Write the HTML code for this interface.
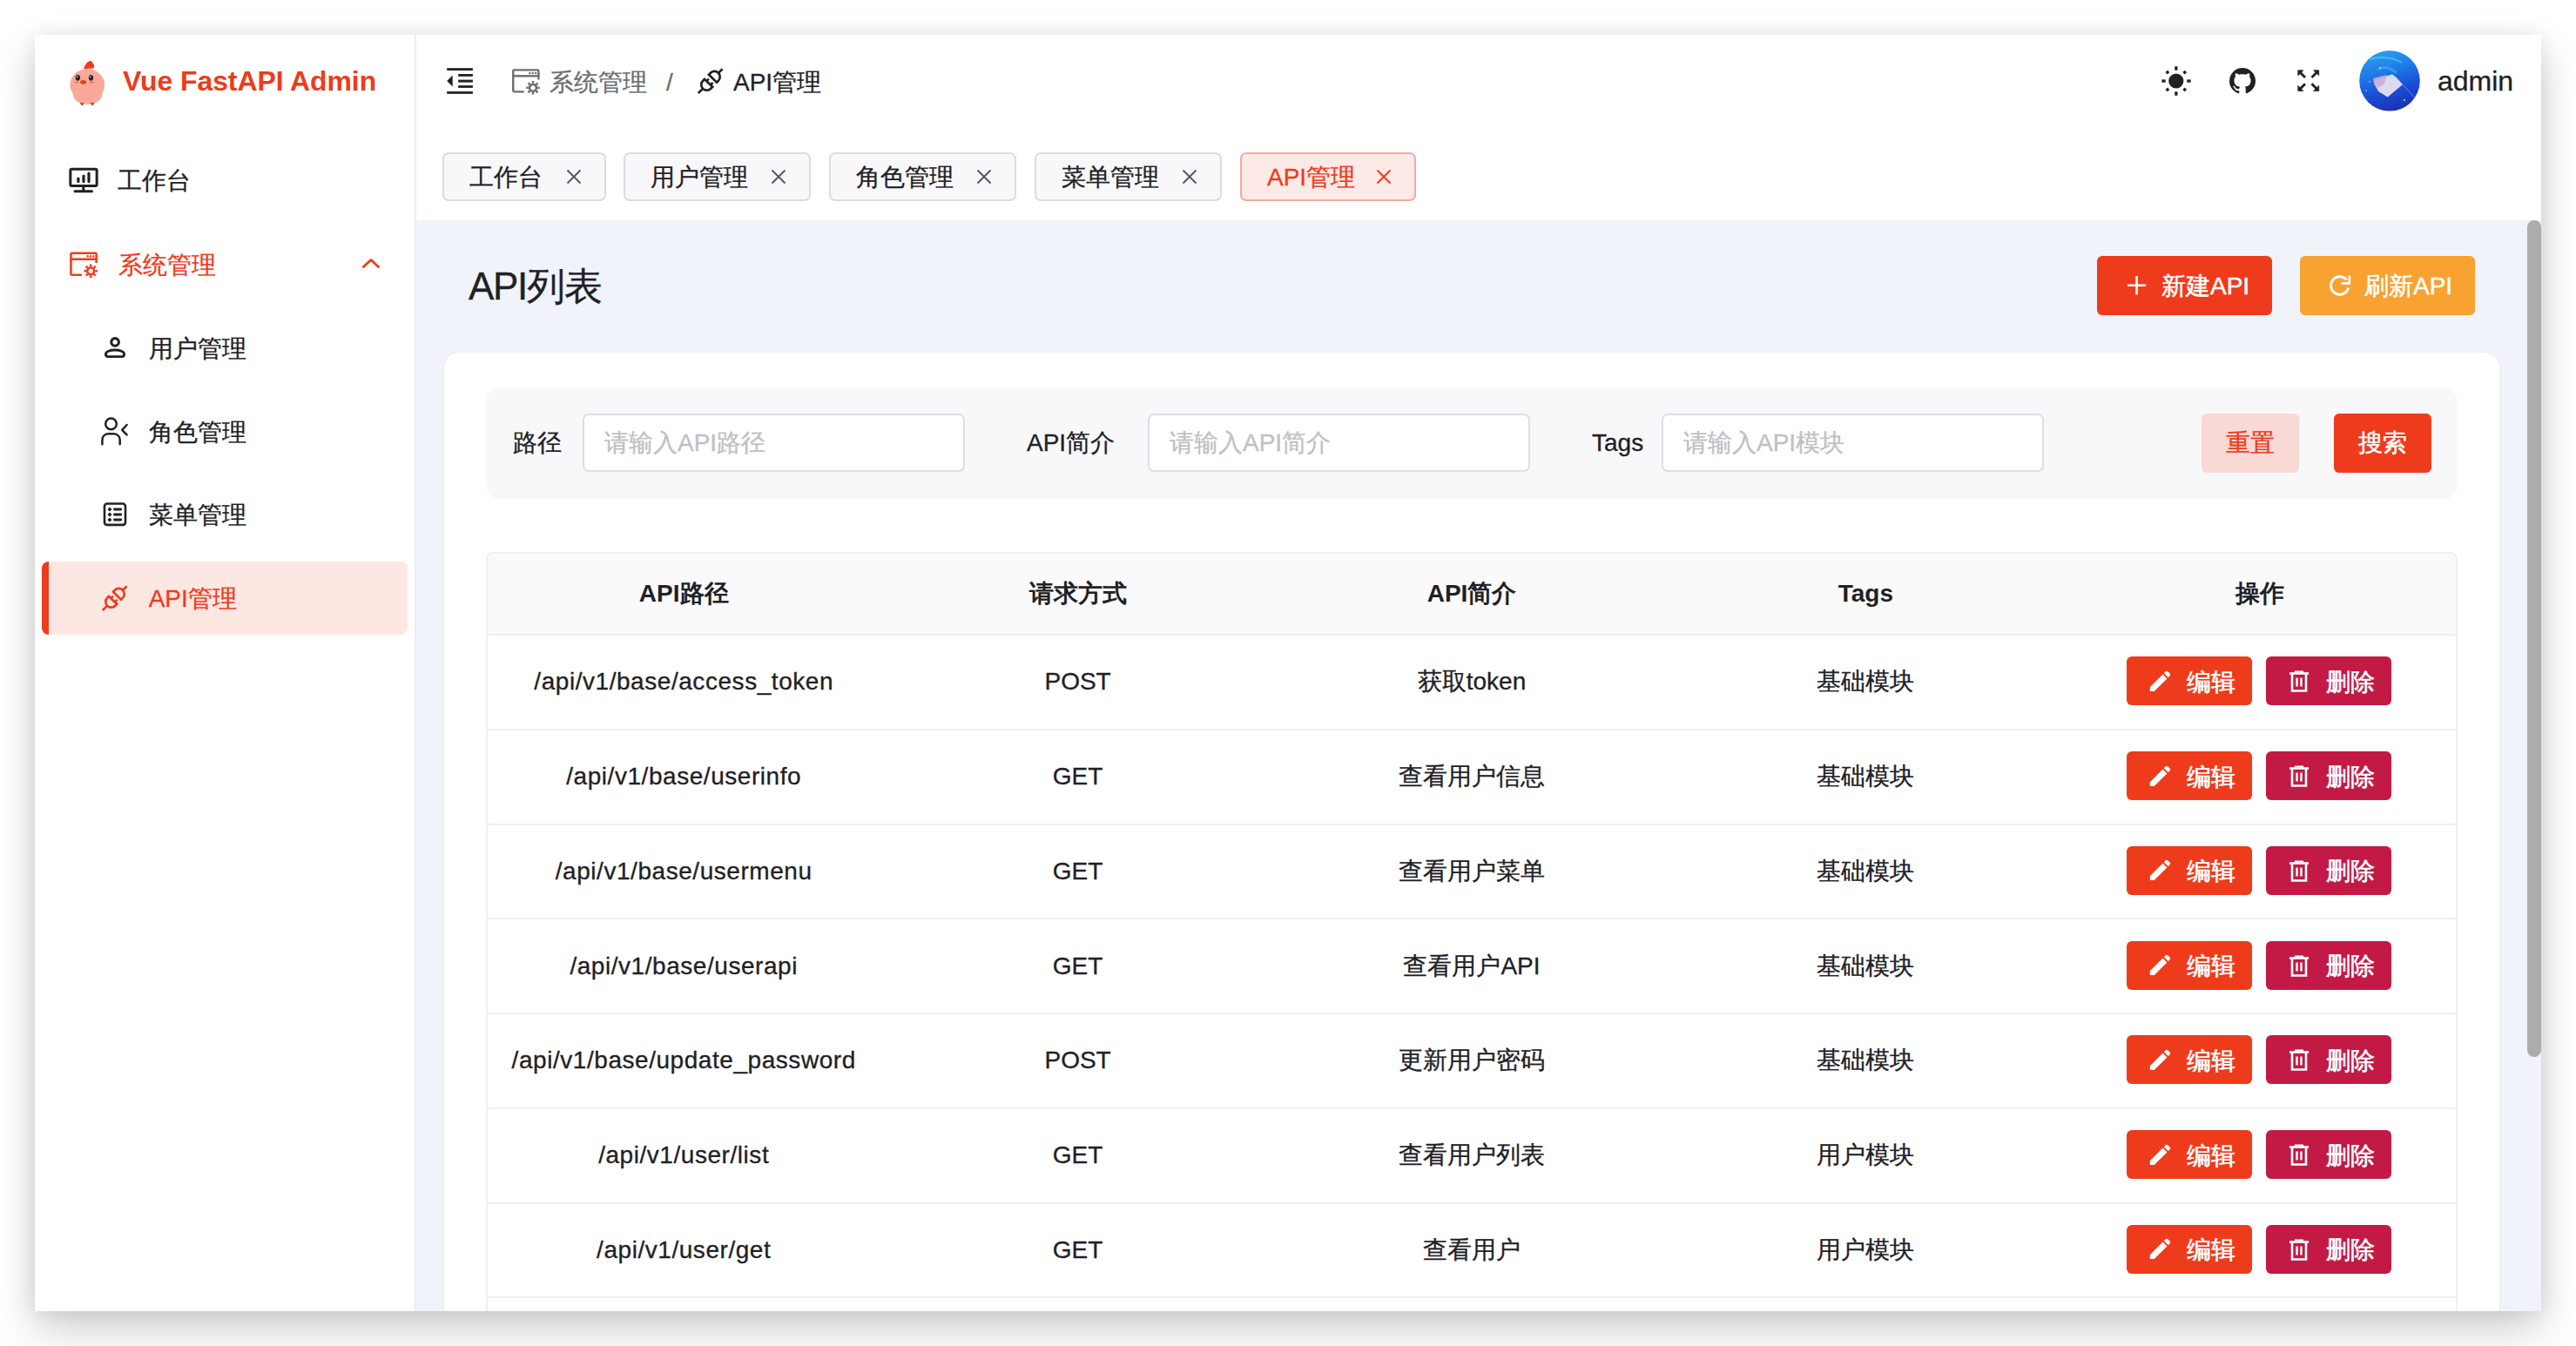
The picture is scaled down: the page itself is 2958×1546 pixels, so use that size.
<!DOCTYPE html>
<html><head><meta charset="utf-8">
<style>
*{box-sizing:border-box;margin:0;padding:0}
html,body{width:2958px;height:1546px;overflow:hidden;background:#ffffff;font-family:"Liberation Sans",sans-serif;color:#1f2125}
.abs{position:absolute;overflow:visible}
.t{position:absolute;white-space:nowrap;-webkit-text-stroke:0.3px currentColor}
.r{position:absolute}
</style></head><body>

<div class="r" style="left:40px;top:40px;width:2878px;height:1466px;background:#fff;box-shadow:0 20px 45px rgba(0,0,0,0.20),0 0 20px rgba(0,0,0,0.07)"></div>
<div class="r" style="left:0;top:0;width:2918px;height:1506px;overflow:hidden">
<div class="r" style="left:478px;top:253px;width:2440px;height:1253px;background:#f1f3fa"></div>
<div class="r" style="left:476px;top:40px;width:2px;height:1466px;background:#ececf2"></div>
<svg class="abs" style="left:74px;top:64px" width="54" height="62" viewBox="74 64 54 62" >
  <path d="M96.2 79 C97 75 99.5 71.5 102.5 70.2 C105 69.5 106.8 71.2 106.5 73.3 C108.6 73.6 108.8 76.5 107.3 78.5 Z" fill="#ea3c1c"/>
  <path d="M94.5 72.5 v1.5 M94.5 75 v1.5" stroke="#cf8a80" stroke-width="0.6"/>
  <ellipse cx="100.6" cy="110.5" rx="15.5" ry="9.5" fill="#f8ab9b"/>
  <path d="M86 106 C82.5 107 83.5 114 88 114.5 Z" fill="#f6b2a5"/>
  <path d="M114.5 106 C119 106.5 118.5 113.5 113 114.5 Z" fill="#f6b2a5"/>
  <ellipse cx="100.3" cy="97.5" rx="19.8" ry="18.4" fill="#f8a898"/>
  <ellipse cx="89.3" cy="89.3" rx="2.6" ry="3.4" fill="#1e2230"/>
  <ellipse cx="104.5" cy="89.3" rx="2.6" ry="3.4" fill="#1e2230"/>
  <ellipse cx="88.6" cy="88.2" rx="0.6" ry="1" fill="#fff"/><ellipse cx="103.8" cy="88.2" rx="0.6" ry="1" fill="#fff"/>
  <ellipse cx="95.6" cy="94.3" rx="3.5" ry="2.4" fill="#ea3c1c"/>
  <rect x="86" y="93.8" width="4.2" height="1.3" fill="#f06048"/>
  <rect x="103.2" y="93.8" width="4.2" height="1.3" fill="#f06048"/>
  <path d="M91.5 118 L94 121.8 L96.8 118 Z M103.3 118 L106 121.8 L108.8 118 Z" fill="#ea3c1c"/>
</svg>
<div class="t" style="left:141px;top:72.50px;font-size:32px;line-height:40px;color:#ea3d1c;font-weight:bold;letter-spacing:-0.1px;-webkit-text-stroke:0">Vue FastAPI Admin</div>
<svg class="abs" style="left:72px;top:185px" width="50" height="43" viewBox="72 185 50 43" ><g fill="none" stroke="#1f2125" stroke-linecap="round" stroke-linejoin="round">
 <rect x="80.85" y="194.3" width="30.3" height="19.2" rx="1.5" stroke-width="3"/>
 <path d="M95.8 214 V219.5 M86 219.7 H105.5" stroke-width="3"/>
 <path d="M89.9 205 V208.6 M96 202.2 V208.6 M102 199 V208.6" stroke-width="3.2"/></g></svg>
<div class="t" style="left:135px;top:187.70px;font-size:28px;line-height:40px;color:#1f2125;">工作台</div>
<svg class="abs" style="left:72px;top:280px" width="50" height="44" viewBox="72 280 50 44" ><g transform="translate(-507.8 210.39999999999998)" fill="none" stroke="#ee3b1b" stroke-width="2.5" stroke-linejoin="round">
 <path d="M601.7 105.35 H590.5 Q589.25 105.35 589.25 104.1 V81.6 Q589.25 80.35 590.5 80.35 H617.2 Q618.45 80.35 618.45 81.6 V91.6"/>
 <path d="M589.25 87.3 H618.45"/>
 <circle cx="608.4" cy="83.9" r="1.25" fill="#ee3b1b" stroke="none"/>
 <circle cx="611.8" cy="83.9" r="1.25" fill="#ee3b1b" stroke="none"/>
 <circle cx="615.2" cy="83.9" r="1.25" fill="#ee3b1b" stroke="none"/>
 <circle cx="612" cy="100.8" r="3.9" stroke-width="2.6"/>
 <path d="M612 93.1 V95.6 M612 106 V108.5 M604.3 100.8 H606.8 M617.2 100.8 H619.7 M606.55 95.35 L608.3 97.1 M615.7 104.5 L617.45 106.25 M606.55 106.25 L608.3 104.5 M615.7 97.1 L617.45 95.35" stroke-width="2.5"/>
</g></svg>
<div class="t" style="left:135.5px;top:284.50px;font-size:28px;line-height:40px;color:#ee3b1b;">系统管理</div>
<svg class="abs" style="left:410px;top:290px" width="32" height="24" viewBox="410 290 32 24" ><path d="M417.3 306.6 L426 298.4 L434.6 306.6" fill="none" stroke="#ee3b1b" stroke-width="2.8" stroke-linecap="round" stroke-linejoin="round"/></svg>
<svg class="abs" style="left:112px;top:380px" width="40" height="36" viewBox="112 380 40 36" ><g fill="none" stroke="#1f2125" stroke-width="2.9" stroke-linejoin="round">
 <circle cx="132.1" cy="392.9" r="4.3" stroke-width="3.1"/>
 <path d="M124 409.6 H140.2 C141.8 409.6 142.6 408.4 142.6 406.8 C142.6 403.8 137.5 402 132 402 C126.5 402 121.4 403.8 121.4 406.8 C121.4 408.4 122.2 409.6 124 409.6 Z"/></g></svg>
<div class="t" style="left:170.7px;top:380.70px;font-size:28px;line-height:40px;color:#1f2125;">用户管理</div>
<svg class="abs" style="left:110px;top:474px" width="42" height="42" viewBox="110 474 42 42" ><g fill="none" stroke="#1f2125" stroke-width="2.5" stroke-linecap="round" stroke-linejoin="round">
 <circle cx="127.5" cy="486.9" r="6.3"/>
 <path d="M117.4 510.3 V505.5 C117.4 500.8 120.8 498.3 125 498.3 H130 C134.2 498.3 137.7 500.8 137.7 505.5 V510.3"/>
 <path d="M145.6 488 L140.2 493.8 L145.6 499.3"/></g></svg>
<div class="t" style="left:170.7px;top:476.50px;font-size:28px;line-height:40px;color:#1f2125;">角色管理</div>
<svg class="abs" style="left:112px;top:570px" width="40" height="40" viewBox="112 570 40 40" ><g fill="none" stroke="#1f2125">
 <rect x="120" y="578.5" width="24" height="24.4" rx="3" stroke-width="2.6"/>
 <path d="M131.4 585 H138.8 M131.4 591 H138.8 M131.4 597 H138.8" stroke-width="2.8" stroke-linecap="round"/>
 <path d="M126 583.3 L127.7 585 L126 586.7 L124.3 585 Z M126 589.3 L127.7 591 L126 592.7 L124.3 591 Z M126 595.3 L127.7 597 L126 598.7 L124.3 597 Z" fill="#1f2125" stroke="#1f2125" stroke-width="1.2"/></g></svg>
<div class="t" style="left:170.7px;top:571.50px;font-size:28px;line-height:40px;color:#1f2125;">菜单管理</div>
<div class="r" style="left:48px;top:645px;width:420px;height:84px;background:#fde7e3;border-radius:8px;overflow:hidden"><div class="r" style="left:0;top:0;width:8px;height:84px;background:#ee3b1b"></div></div>
<svg class="abs" style="left:105px;top:660px" width="50" height="50" viewBox="105 660 50 50" ><g transform="translate(111 666)" fill="none" stroke="#ee3b1b" stroke-width="2.7" stroke-linejoin="miter">
 <path d="M19 13.7 L21 11.7 A6.33 6.33 0 0 1 30 20.6 L28 22.6 Z"/>
 <path d="M30.2 11.6 L34.6 7.2"/>
 <path d="M14 19 L23.2 27.7 L21.2 29.7 A6.33 6.33 0 0 1 12 21 Z"/>
 <path d="M12 29.9 L6.8 35"/>
 <path d="M16.3 21.2 L18.9 18.6 M20.9 25.5 L23.5 22.9"/>
</g></svg>
<div class="t" style="left:170.7px;top:668.00px;font-size:28px;line-height:40px;color:#ee3b1b;">API管理</div>
<svg class="abs" style="left:505px;top:70px" width="50" height="45" viewBox="505 70 50 45" ><g fill="#1f2125">
 <rect x="513.2" y="78.2" width="29.7" height="2.8"/>
 <rect x="526.2" y="85" width="16.7" height="2.8"/>
 <rect x="526.2" y="91.6" width="16.7" height="3"/>
 <rect x="526.2" y="98.1" width="16.7" height="2.8"/>
 <rect x="513.2" y="105" width="29.7" height="2.8"/>
 <path d="M513.2 92.9 L519.7 86.4 V99.4 Z"/></g></svg>
<svg class="abs" style="left:580px;top:72px" width="50" height="40" viewBox="580 72 50 40" ><g transform="translate(0 0)" fill="none" stroke="#6b6e73" stroke-width="2.4" stroke-linejoin="round">
 <path d="M601.7 105.35 H590.5 Q589.25 105.35 589.25 104.1 V81.6 Q589.25 80.35 590.5 80.35 H617.2 Q618.45 80.35 618.45 81.6 V91.6"/>
 <path d="M589.25 87.3 H618.45"/>
 <circle cx="608.4" cy="83.9" r="1.25" fill="#6b6e73" stroke="none"/>
 <circle cx="611.8" cy="83.9" r="1.25" fill="#6b6e73" stroke="none"/>
 <circle cx="615.2" cy="83.9" r="1.25" fill="#6b6e73" stroke="none"/>
 <circle cx="612" cy="100.8" r="3.9" stroke-width="2.6"/>
 <path d="M612 93.1 V95.6 M612 106 V108.5 M604.3 100.8 H606.8 M617.2 100.8 H619.7 M606.55 95.35 L608.3 97.1 M615.7 104.5 L617.45 106.25 M606.55 106.25 L608.3 104.5 M615.7 97.1 L617.45 95.35" stroke-width="2.5"/>
</g></svg>
<div class="t" style="left:631px;top:74.50px;font-size:28px;line-height:40px;color:#6b6e73;">系统管理</div>
<div class="t" style="left:765px;top:74.50px;font-size:28px;line-height:40px;color:#6b6e73;">/</div>
<svg class="abs" style="left:795px;top:72px" width="45" height="40" viewBox="795 72 45 40" ><g transform="translate(795 72)" fill="none" stroke="#1f2125" stroke-width="2.7" stroke-linejoin="miter">
 <path d="M19 13.7 L21 11.7 A6.33 6.33 0 0 1 30 20.6 L28 22.6 Z"/>
 <path d="M30.2 11.6 L34.6 7.2"/>
 <path d="M14 19 L23.2 27.7 L21.2 29.7 A6.33 6.33 0 0 1 12 21 Z"/>
 <path d="M12 29.9 L6.8 35"/>
 <path d="M16.3 21.2 L18.9 18.6 M20.9 25.5 L23.5 22.9"/>
</g></svg>
<div class="t" style="left:842px;top:74.50px;font-size:28px;line-height:40px;color:#1f2125;">API管理</div>
<svg class="abs" style="left:2475px;top:68px" width="50" height="50" viewBox="2475 68 50 50" ><g fill="#1f2125">
 <circle cx="2498.8" cy="93" r="8.6"/>
 <rect x="2497.2" y="76.3" width="3.3" height="4.4"/>
 <rect x="2497.2" y="105.3" width="3.3" height="4.4"/>
 <rect x="2482.3" y="91.4" width="4.4" height="3.3"/>
 <rect x="2511.2" y="91.4" width="4.4" height="3.3"/>
 <g transform="rotate(45 2498.8 93)">
  <rect x="2497.1" y="77.3" width="3.4" height="3.4"/>
  <rect x="2497.1" y="105.3" width="3.4" height="3.4"/>
  <rect x="2483.1" y="91.3" width="3.4" height="3.4"/>
  <rect x="2511.1" y="91.3" width="3.4" height="3.4"/>
 </g></g></svg>
<svg class="abs" style="left:2557px;top:74.5px" width="36" height="36" viewBox="0 0 24 24"><path fill="#1f2125" d="M12 2A10 10 0 0 0 2 12c0 4.42 2.87 8.17 6.84 9.5c.5.08.66-.23.66-.5v-1.69c-2.77.6-3.36-1.34-3.36-1.34c-.46-1.16-1.11-1.470-1.11-1.47c-.91-.62.07-.6.07-.6c1 .07 1.53 1.03 1.53 1.03c.87 1.52 2.34 1.07 2.910 .83c.09-.65.35-1.09.63-1.34c-2.22-.25-4.55-1.11-4.55-4.92c0-1.11.38-2 1.03-2.71c-.1-.25-.45-1.29.1-2.64c0 0 .84-.27 2.75 1.02c.79-.22 1.65-.33 2.5-.33c.85 0 1.71.11 2.5.33c1.910-1.29 2.75-1.02 2.75-1.02c.55 1.35.2 2.39.1 2.64c.65.71 1.03 1.6 1.03 2.71c0 3.82-2.34 4.66-4.57 4.91c.36.31.69.92.69 1.85V21c0 .27.16.59.67.5C19.14 20.16 22 16.42 22 12A10 10 0 0 0 12 2"/></svg>
<svg class="abs" style="left:2630px;top:72px" width="42" height="42" viewBox="2630 72 42 42" ><g fill="#1f2125" stroke="#1f2125">
 <path d="M2640.5 82.5 L2647 89" stroke-width="2.9" fill="none"/>
 <path d="M2661 82.5 L2654.5 89" stroke-width="2.9" fill="none"/>
 <path d="M2640.5 102.7 L2647 96.2" stroke-width="2.9" fill="none"/>
 <path d="M2661 102.7 L2654.5 96.2" stroke-width="2.9" fill="none"/>
 <path d="M2638.8 80.8 H2644.8 L2638.8 86.8 Z" stroke-width="0.8"/>
 <path d="M2662.7 80.8 H2656.7 L2662.7 86.8 Z" stroke-width="0.8"/>
 <path d="M2638.8 104.4 H2644.8 L2638.8 98.4 Z" stroke-width="0.8"/>
 <path d="M2662.7 104.4 H2656.7 L2662.7 98.4 Z" stroke-width="0.8"/></g></svg>
<svg class="abs" style="left:2704px;top:54px" width="80" height="80" viewBox="2704 54 80 80" >
 <defs>
  <linearGradient id="avg" x1="0.35" y1="0" x2="0.65" y2="1">
   <stop offset="0" stop-color="#2b9ff0"/><stop offset="0.35" stop-color="#1f78e6"/>
   <stop offset="0.65" stop-color="#1a4ed6"/><stop offset="1" stop-color="#1b2fae"/>
  </linearGradient>
  <clipPath id="avc"><circle cx="2744" cy="92.8" r="34.8"/></clipPath>
 </defs>
 <circle cx="2744" cy="92.8" r="34.8" fill="url(#avg)"/>
 <g clip-path="url(#avc)">
  <path d="M2722 68 C2732 64 2748 66 2758 72" stroke="#5fd0ff" stroke-width="2" fill="none" opacity="0.6"/>
  <path d="M2730 80 C2738 76 2746 78 2752 84" stroke="#4ec3ff" stroke-width="3" fill="none" opacity="0.45"/>
  <path d="M2726.6 91.7 L2736.4 88.8 L2746.9 85.3 L2751.5 88.8 L2759 96.9 L2741.7 111.4 L2731.2 105 L2727.2 98 Z" fill="#dcdaf0"/>
  <path d="M2725 90 L2736 87 L2741 86 L2738 96 L2731 101 L2726 97 Z" fill="#c8a9dc" opacity="0.85"/>
  <path d="M2759 96.9 L2778 118" stroke="#9fb6ff" stroke-width="1" opacity="0.6"/>
  <circle cx="2733" cy="78" r="0.9" fill="#bff"/><circle cx="2717" cy="104" r="0.8" fill="#cdf"/>
  <circle cx="2761" cy="115" r="1" fill="#cdf"/><circle cx="2721" cy="94" r="0.8" fill="#cdf"/>
 </g>
</svg>
<div class="t" style="left:2799px;top:73.00px;font-size:32px;line-height:40px;color:#1f2125;">admin</div>
<div class="r" style="left:508px;top:175px;width:188px;height:56px;border:2px solid #dcdce2;border-radius:7px;background:#f8f8fb"></div><div class="t" style="left:539px;top:183.80px;font-size:28px;line-height:40px;color:#1f2125;">工作台</div><svg class="abs" style="left:648.5px;top:193px" width="20" height="20" viewBox="648.5 193 20 20" ><path d="M651.0 195.5 L666.0 210.5 M666.0 195.5 L651.0 210.5" stroke="#55575c" stroke-width="1.9" fill="none"/></svg>
<div class="r" style="left:716px;top:175px;width:215px;height:56px;border:2px solid #dcdce2;border-radius:7px;background:#f8f8fb"></div><div class="t" style="left:747px;top:183.80px;font-size:28px;line-height:40px;color:#1f2125;">用户管理</div><svg class="abs" style="left:883.5px;top:193px" width="20" height="20" viewBox="883.5 193 20 20" ><path d="M886.0 195.5 L901.0 210.5 M901.0 195.5 L886.0 210.5" stroke="#55575c" stroke-width="1.9" fill="none"/></svg>
<div class="r" style="left:952px;top:175px;width:215px;height:56px;border:2px solid #dcdce2;border-radius:7px;background:#f8f8fb"></div><div class="t" style="left:983px;top:183.80px;font-size:28px;line-height:40px;color:#1f2125;">角色管理</div><svg class="abs" style="left:1119.5px;top:193px" width="20" height="20" viewBox="1119.5 193 20 20" ><path d="M1122.0 195.5 L1137.0 210.5 M1137.0 195.5 L1122.0 210.5" stroke="#55575c" stroke-width="1.9" fill="none"/></svg>
<div class="r" style="left:1188px;top:175px;width:215px;height:56px;border:2px solid #dcdce2;border-radius:7px;background:#f8f8fb"></div><div class="t" style="left:1219px;top:183.80px;font-size:28px;line-height:40px;color:#1f2125;">菜单管理</div><svg class="abs" style="left:1355.5px;top:193px" width="20" height="20" viewBox="1355.5 193 20 20" ><path d="M1358.0 195.5 L1373.0 210.5 M1373.0 195.5 L1358.0 210.5" stroke="#55575c" stroke-width="1.9" fill="none"/></svg>
<div class="r" style="left:1424px;top:175px;width:202px;height:56px;border:2px solid #eeaca2;border-radius:7px;background:#fde9e5"></div><div class="t" style="left:1455px;top:183.80px;font-size:28px;line-height:40px;color:#ee3b1b;">API管理</div><svg class="abs" style="left:1578.5px;top:193px" width="20" height="20" viewBox="1578.5 193 20 20" ><path d="M1581.0 195.5 L1596.0 210.5 M1596.0 195.5 L1581.0 210.5" stroke="#ee3b1b" stroke-width="1.9" fill="none"/></svg>
<div class="r" style="left:2902px;top:253px;width:16px;height:961px;background:#acacac;border-radius:8px"></div>
<div class="t" style="left:538px;top:299.00px;font-size:44px;line-height:60px;color:#1f2125;letter-spacing:-1.3px">API列表</div>
<div class="r" style="left:2408px;top:294px;width:201px;height:68px;background:#ee3b1b;border-radius:6px"></div><svg class="abs" style="left:2440px;top:315px" width="26" height="26" viewBox="2440 315 26 26" ><path d="M2453.6 317 V338.6 M2442.9 327.8 H2464.3" stroke="#fff" stroke-width="2.6" fill="none"/></svg><div class="t" style="left:2482px;top:308.50px;font-size:28px;line-height:40px;color:#fff;-webkit-text-stroke:0.5px #fff">新建API</div>
<div class="r" style="left:2641px;top:294px;width:201px;height:68px;background:#f8a232;border-radius:6px"></div><svg class="abs" style="left:2670px;top:310px" width="34" height="34" viewBox="2670 310 34 34" ><path d="M2696.6 330.6 A10.2 10.2 0 1 1 2694.5 321.4" stroke="#fff" stroke-width="3" fill="none"/><path d="M2697.8 316.6 V325.4 H2688.6" stroke="#fff" stroke-width="2.7" fill="none" stroke-linejoin="miter"/></svg><div class="t" style="left:2715px;top:308.50px;font-size:28px;line-height:40px;color:#fff;-webkit-text-stroke:0.5px #fff">刷新API</div>
<div class="r" style="left:509px;top:404px;width:2362px;height:1300px;background:#fff;border-radius:18px;border:1px solid #ececf3"></div>
<div class="r" style="left:558px;top:446px;width:2264px;height:127px;background:#f8f8fb;border-radius:16px"></div>
<div class="t" style="left:589px;top:489.00px;font-size:28px;line-height:40px;color:#1f2125;">路径</div>
<div class="t" style="left:1179px;top:489.00px;font-size:28px;line-height:40px;color:#1f2125;">API简介</div>
<div class="t" style="left:1828px;top:489.00px;font-size:28px;line-height:40px;color:#1f2125;">Tags</div>
<div class="r" style="left:669px;top:475px;width:439px;height:67px;border:2px solid #dedee4;border-radius:7px;background:#fff"></div>
<div class="t" style="left:694px;top:489.00px;font-size:28px;line-height:40px;color:#c0c0c4;">请输入API路径</div>
<div class="r" style="left:1318px;top:475px;width:439px;height:67px;border:2px solid #dedee4;border-radius:7px;background:#fff"></div>
<div class="t" style="left:1343px;top:489.00px;font-size:28px;line-height:40px;color:#c0c0c4;">请输入API简介</div>
<div class="r" style="left:1908px;top:475px;width:439px;height:67px;border:2px solid #dedee4;border-radius:7px;background:#fff"></div>
<div class="t" style="left:1933px;top:489.00px;font-size:28px;line-height:40px;color:#c0c0c4;">请输入API模块</div>
<div class="r" style="left:2528px;top:475px;width:112px;height:68px;background:#f9d9d5;border-radius:6px"></div><div class="t" style="left:2556px;top:489.00px;font-size:28px;line-height:40px;color:#ee3b1b;">重置</div>
<div class="r" style="left:2680px;top:475px;width:112px;height:68px;background:#ee3b1b;border-radius:6px"></div><div class="t" style="left:2708px;top:489.00px;font-size:28px;line-height:40px;color:#fff;-webkit-text-stroke:0.5px #fff">搜索</div>
<div class="r" style="left:558px;top:634px;width:2264px;height:1000px;border:2px solid #efeff5;border-radius:8px;background:#fff"></div>
<div class="r" style="left:560px;top:636px;width:2260px;height:93px;background:#fafafc;border-radius:6px 6px 0 0"></div>
<div class="r" style="left:558px;top:728px;width:2264px;height:2px;background:#efeff5"></div>
<div class="t" style="left:585.2px;top:661.5px;width:400px;text-align:center;font-size:28px;line-height:40px;font-weight:bold;color:#1f2125;-webkit-text-stroke:0">API路径</div>
<div class="t" style="left:1037.6px;top:661.5px;width:400px;text-align:center;font-size:28px;line-height:40px;font-weight:bold;color:#1f2125;-webkit-text-stroke:0">请求方式</div>
<div class="t" style="left:1490px;top:661.5px;width:400px;text-align:center;font-size:28px;line-height:40px;font-weight:bold;color:#1f2125;-webkit-text-stroke:0">API简介</div>
<div class="t" style="left:1942.4px;top:661.5px;width:400px;text-align:center;font-size:28px;line-height:40px;font-weight:bold;color:#1f2125;-webkit-text-stroke:0">Tags</div>
<div class="t" style="left:2394.8px;top:661.5px;width:400px;text-align:center;font-size:28px;line-height:40px;font-weight:bold;color:#1f2125;-webkit-text-stroke:0">操作</div>
<div class="t" style="left:565.2px;top:763.38px;width:440px;text-align:center;font-size:28px;line-height:40px;color:#1f2125;letter-spacing:0.55px;">/api/v1/base/access_token</div>
<div class="t" style="left:1017.5999999999999px;top:763.38px;width:440px;text-align:center;font-size:28px;line-height:40px;color:#1f2125;">POST</div>
<div class="t" style="left:1470px;top:763.38px;width:440px;text-align:center;font-size:28px;line-height:40px;color:#1f2125;">获取token</div>
<div class="t" style="left:1922.4px;top:763.38px;width:440px;text-align:center;font-size:28px;line-height:40px;color:#1f2125;">基础模块</div>
<div class="r" style="left:2442px;top:754.38px;width:144px;height:56px;background:#ee3b1b;border-radius:6px"></div>
<div class="r" style="left:2602px;top:754.38px;width:144px;height:56px;background:#c21a44;border-radius:6px"></div>
<svg class="abs" style="left:2467px;top:769.88px" width="25" height="25" viewBox="0 0 28 28"><path d="M2 27 V21.5 L18.5 5 L24 10.5 L7.5 27 Z M20 3.5 L22 1.5 C23 0.5 24 0.5 25 1.5 L27.5 4 C28.5 5 28.5 6 27.5 7 L25.5 9 Z" fill="#fff"/></svg>
<div class="t" style="left:2511px;top:763.88px;font-size:28px;line-height:40px;color:#fff;-webkit-text-stroke:0.6px #fff">编辑</div>
<svg class="abs" style="left:2627px;top:770.38px" width="26" height="26" viewBox="0 0 26 26" fill="none" stroke="#fff"><path d="M2 3.5 H24" stroke-width="2.6"/><path d="M9 3.5 V1.5 H17 V3.5" stroke-width="2.2"/><path d="M5 4 V23.5 H21 V4" stroke-width="2.6"/><path d="M10.5 8.5 V18.5 M15.5 8.5 V18.5" stroke-width="2.4"/></svg>
<div class="t" style="left:2671px;top:763.88px;font-size:28px;line-height:40px;color:#fff;-webkit-text-stroke:0.6px #fff">删除</div>
<div class="r" style="left:560px;top:836.75px;width:2260px;height:2px;background:#efeff5"></div>
<div class="t" style="left:565.2px;top:872.12px;width:440px;text-align:center;font-size:28px;line-height:40px;color:#1f2125;letter-spacing:0.55px;">/api/v1/base/userinfo</div>
<div class="t" style="left:1017.5999999999999px;top:872.12px;width:440px;text-align:center;font-size:28px;line-height:40px;color:#1f2125;">GET</div>
<div class="t" style="left:1470px;top:872.12px;width:440px;text-align:center;font-size:28px;line-height:40px;color:#1f2125;">查看用户信息</div>
<div class="t" style="left:1922.4px;top:872.12px;width:440px;text-align:center;font-size:28px;line-height:40px;color:#1f2125;">基础模块</div>
<div class="r" style="left:2442px;top:863.12px;width:144px;height:56px;background:#ee3b1b;border-radius:6px"></div>
<div class="r" style="left:2602px;top:863.12px;width:144px;height:56px;background:#c21a44;border-radius:6px"></div>
<svg class="abs" style="left:2467px;top:878.62px" width="25" height="25" viewBox="0 0 28 28"><path d="M2 27 V21.5 L18.5 5 L24 10.5 L7.5 27 Z M20 3.5 L22 1.5 C23 0.5 24 0.5 25 1.5 L27.5 4 C28.5 5 28.5 6 27.5 7 L25.5 9 Z" fill="#fff"/></svg>
<div class="t" style="left:2511px;top:872.62px;font-size:28px;line-height:40px;color:#fff;-webkit-text-stroke:0.6px #fff">编辑</div>
<svg class="abs" style="left:2627px;top:879.12px" width="26" height="26" viewBox="0 0 26 26" fill="none" stroke="#fff"><path d="M2 3.5 H24" stroke-width="2.6"/><path d="M9 3.5 V1.5 H17 V3.5" stroke-width="2.2"/><path d="M5 4 V23.5 H21 V4" stroke-width="2.6"/><path d="M10.5 8.5 V18.5 M15.5 8.5 V18.5" stroke-width="2.4"/></svg>
<div class="t" style="left:2671px;top:872.62px;font-size:28px;line-height:40px;color:#fff;-webkit-text-stroke:0.6px #fff">删除</div>
<div class="r" style="left:560px;top:945.50px;width:2260px;height:2px;background:#efeff5"></div>
<div class="t" style="left:565.2px;top:980.88px;width:440px;text-align:center;font-size:28px;line-height:40px;color:#1f2125;letter-spacing:0.55px;">/api/v1/base/usermenu</div>
<div class="t" style="left:1017.5999999999999px;top:980.88px;width:440px;text-align:center;font-size:28px;line-height:40px;color:#1f2125;">GET</div>
<div class="t" style="left:1470px;top:980.88px;width:440px;text-align:center;font-size:28px;line-height:40px;color:#1f2125;">查看用户菜单</div>
<div class="t" style="left:1922.4px;top:980.88px;width:440px;text-align:center;font-size:28px;line-height:40px;color:#1f2125;">基础模块</div>
<div class="r" style="left:2442px;top:971.88px;width:144px;height:56px;background:#ee3b1b;border-radius:6px"></div>
<div class="r" style="left:2602px;top:971.88px;width:144px;height:56px;background:#c21a44;border-radius:6px"></div>
<svg class="abs" style="left:2467px;top:987.38px" width="25" height="25" viewBox="0 0 28 28"><path d="M2 27 V21.5 L18.5 5 L24 10.5 L7.5 27 Z M20 3.5 L22 1.5 C23 0.5 24 0.5 25 1.5 L27.5 4 C28.5 5 28.5 6 27.5 7 L25.5 9 Z" fill="#fff"/></svg>
<div class="t" style="left:2511px;top:981.38px;font-size:28px;line-height:40px;color:#fff;-webkit-text-stroke:0.6px #fff">编辑</div>
<svg class="abs" style="left:2627px;top:987.88px" width="26" height="26" viewBox="0 0 26 26" fill="none" stroke="#fff"><path d="M2 3.5 H24" stroke-width="2.6"/><path d="M9 3.5 V1.5 H17 V3.5" stroke-width="2.2"/><path d="M5 4 V23.5 H21 V4" stroke-width="2.6"/><path d="M10.5 8.5 V18.5 M15.5 8.5 V18.5" stroke-width="2.4"/></svg>
<div class="t" style="left:2671px;top:981.38px;font-size:28px;line-height:40px;color:#fff;-webkit-text-stroke:0.6px #fff">删除</div>
<div class="r" style="left:560px;top:1054.25px;width:2260px;height:2px;background:#efeff5"></div>
<div class="t" style="left:565.2px;top:1089.62px;width:440px;text-align:center;font-size:28px;line-height:40px;color:#1f2125;letter-spacing:0.55px;">/api/v1/base/userapi</div>
<div class="t" style="left:1017.5999999999999px;top:1089.62px;width:440px;text-align:center;font-size:28px;line-height:40px;color:#1f2125;">GET</div>
<div class="t" style="left:1470px;top:1089.62px;width:440px;text-align:center;font-size:28px;line-height:40px;color:#1f2125;">查看用户API</div>
<div class="t" style="left:1922.4px;top:1089.62px;width:440px;text-align:center;font-size:28px;line-height:40px;color:#1f2125;">基础模块</div>
<div class="r" style="left:2442px;top:1080.62px;width:144px;height:56px;background:#ee3b1b;border-radius:6px"></div>
<div class="r" style="left:2602px;top:1080.62px;width:144px;height:56px;background:#c21a44;border-radius:6px"></div>
<svg class="abs" style="left:2467px;top:1096.12px" width="25" height="25" viewBox="0 0 28 28"><path d="M2 27 V21.5 L18.5 5 L24 10.5 L7.5 27 Z M20 3.5 L22 1.5 C23 0.5 24 0.5 25 1.5 L27.5 4 C28.5 5 28.5 6 27.5 7 L25.5 9 Z" fill="#fff"/></svg>
<div class="t" style="left:2511px;top:1090.12px;font-size:28px;line-height:40px;color:#fff;-webkit-text-stroke:0.6px #fff">编辑</div>
<svg class="abs" style="left:2627px;top:1096.62px" width="26" height="26" viewBox="0 0 26 26" fill="none" stroke="#fff"><path d="M2 3.5 H24" stroke-width="2.6"/><path d="M9 3.5 V1.5 H17 V3.5" stroke-width="2.2"/><path d="M5 4 V23.5 H21 V4" stroke-width="2.6"/><path d="M10.5 8.5 V18.5 M15.5 8.5 V18.5" stroke-width="2.4"/></svg>
<div class="t" style="left:2671px;top:1090.12px;font-size:28px;line-height:40px;color:#fff;-webkit-text-stroke:0.6px #fff">删除</div>
<div class="r" style="left:560px;top:1163.00px;width:2260px;height:2px;background:#efeff5"></div>
<div class="t" style="left:565.2px;top:1198.38px;width:440px;text-align:center;font-size:28px;line-height:40px;color:#1f2125;letter-spacing:0.55px;">/api/v1/base/update_password</div>
<div class="t" style="left:1017.5999999999999px;top:1198.38px;width:440px;text-align:center;font-size:28px;line-height:40px;color:#1f2125;">POST</div>
<div class="t" style="left:1470px;top:1198.38px;width:440px;text-align:center;font-size:28px;line-height:40px;color:#1f2125;">更新用户密码</div>
<div class="t" style="left:1922.4px;top:1198.38px;width:440px;text-align:center;font-size:28px;line-height:40px;color:#1f2125;">基础模块</div>
<div class="r" style="left:2442px;top:1189.38px;width:144px;height:56px;background:#ee3b1b;border-radius:6px"></div>
<div class="r" style="left:2602px;top:1189.38px;width:144px;height:56px;background:#c21a44;border-radius:6px"></div>
<svg class="abs" style="left:2467px;top:1204.88px" width="25" height="25" viewBox="0 0 28 28"><path d="M2 27 V21.5 L18.5 5 L24 10.5 L7.5 27 Z M20 3.5 L22 1.5 C23 0.5 24 0.5 25 1.5 L27.5 4 C28.5 5 28.5 6 27.5 7 L25.5 9 Z" fill="#fff"/></svg>
<div class="t" style="left:2511px;top:1198.88px;font-size:28px;line-height:40px;color:#fff;-webkit-text-stroke:0.6px #fff">编辑</div>
<svg class="abs" style="left:2627px;top:1205.38px" width="26" height="26" viewBox="0 0 26 26" fill="none" stroke="#fff"><path d="M2 3.5 H24" stroke-width="2.6"/><path d="M9 3.5 V1.5 H17 V3.5" stroke-width="2.2"/><path d="M5 4 V23.5 H21 V4" stroke-width="2.6"/><path d="M10.5 8.5 V18.5 M15.5 8.5 V18.5" stroke-width="2.4"/></svg>
<div class="t" style="left:2671px;top:1198.88px;font-size:28px;line-height:40px;color:#fff;-webkit-text-stroke:0.6px #fff">删除</div>
<div class="r" style="left:560px;top:1271.75px;width:2260px;height:2px;background:#efeff5"></div>
<div class="t" style="left:565.2px;top:1307.12px;width:440px;text-align:center;font-size:28px;line-height:40px;color:#1f2125;letter-spacing:0.55px;">/api/v1/user/list</div>
<div class="t" style="left:1017.5999999999999px;top:1307.12px;width:440px;text-align:center;font-size:28px;line-height:40px;color:#1f2125;">GET</div>
<div class="t" style="left:1470px;top:1307.12px;width:440px;text-align:center;font-size:28px;line-height:40px;color:#1f2125;">查看用户列表</div>
<div class="t" style="left:1922.4px;top:1307.12px;width:440px;text-align:center;font-size:28px;line-height:40px;color:#1f2125;">用户模块</div>
<div class="r" style="left:2442px;top:1298.12px;width:144px;height:56px;background:#ee3b1b;border-radius:6px"></div>
<div class="r" style="left:2602px;top:1298.12px;width:144px;height:56px;background:#c21a44;border-radius:6px"></div>
<svg class="abs" style="left:2467px;top:1313.62px" width="25" height="25" viewBox="0 0 28 28"><path d="M2 27 V21.5 L18.5 5 L24 10.5 L7.5 27 Z M20 3.5 L22 1.5 C23 0.5 24 0.5 25 1.5 L27.5 4 C28.5 5 28.5 6 27.5 7 L25.5 9 Z" fill="#fff"/></svg>
<div class="t" style="left:2511px;top:1307.62px;font-size:28px;line-height:40px;color:#fff;-webkit-text-stroke:0.6px #fff">编辑</div>
<svg class="abs" style="left:2627px;top:1314.12px" width="26" height="26" viewBox="0 0 26 26" fill="none" stroke="#fff"><path d="M2 3.5 H24" stroke-width="2.6"/><path d="M9 3.5 V1.5 H17 V3.5" stroke-width="2.2"/><path d="M5 4 V23.5 H21 V4" stroke-width="2.6"/><path d="M10.5 8.5 V18.5 M15.5 8.5 V18.5" stroke-width="2.4"/></svg>
<div class="t" style="left:2671px;top:1307.62px;font-size:28px;line-height:40px;color:#fff;-webkit-text-stroke:0.6px #fff">删除</div>
<div class="r" style="left:560px;top:1380.50px;width:2260px;height:2px;background:#efeff5"></div>
<div class="t" style="left:565.2px;top:1415.88px;width:440px;text-align:center;font-size:28px;line-height:40px;color:#1f2125;letter-spacing:0.55px;">/api/v1/user/get</div>
<div class="t" style="left:1017.5999999999999px;top:1415.88px;width:440px;text-align:center;font-size:28px;line-height:40px;color:#1f2125;">GET</div>
<div class="t" style="left:1470px;top:1415.88px;width:440px;text-align:center;font-size:28px;line-height:40px;color:#1f2125;">查看用户</div>
<div class="t" style="left:1922.4px;top:1415.88px;width:440px;text-align:center;font-size:28px;line-height:40px;color:#1f2125;">用户模块</div>
<div class="r" style="left:2442px;top:1406.88px;width:144px;height:56px;background:#ee3b1b;border-radius:6px"></div>
<div class="r" style="left:2602px;top:1406.88px;width:144px;height:56px;background:#c21a44;border-radius:6px"></div>
<svg class="abs" style="left:2467px;top:1422.38px" width="25" height="25" viewBox="0 0 28 28"><path d="M2 27 V21.5 L18.5 5 L24 10.5 L7.5 27 Z M20 3.5 L22 1.5 C23 0.5 24 0.5 25 1.5 L27.5 4 C28.5 5 28.5 6 27.5 7 L25.5 9 Z" fill="#fff"/></svg>
<div class="t" style="left:2511px;top:1416.38px;font-size:28px;line-height:40px;color:#fff;-webkit-text-stroke:0.6px #fff">编辑</div>
<svg class="abs" style="left:2627px;top:1422.88px" width="26" height="26" viewBox="0 0 26 26" fill="none" stroke="#fff"><path d="M2 3.5 H24" stroke-width="2.6"/><path d="M9 3.5 V1.5 H17 V3.5" stroke-width="2.2"/><path d="M5 4 V23.5 H21 V4" stroke-width="2.6"/><path d="M10.5 8.5 V18.5 M15.5 8.5 V18.5" stroke-width="2.4"/></svg>
<div class="t" style="left:2671px;top:1416.38px;font-size:28px;line-height:40px;color:#fff;-webkit-text-stroke:0.6px #fff">删除</div>
<div class="r" style="left:560px;top:1489.25px;width:2260px;height:2px;background:#efeff5"></div>
<div class="t" style="left:565.2px;top:1524.62px;width:440px;text-align:center;font-size:28px;line-height:40px;color:#1f2125;letter-spacing:0.55px;">/api/v1/user/create</div>
<div class="t" style="left:1017.5999999999999px;top:1524.62px;width:440px;text-align:center;font-size:28px;line-height:40px;color:#1f2125;">POST</div>
<div class="t" style="left:1470px;top:1524.62px;width:440px;text-align:center;font-size:28px;line-height:40px;color:#1f2125;">创建用户</div>
<div class="t" style="left:1922.4px;top:1524.62px;width:440px;text-align:center;font-size:28px;line-height:40px;color:#1f2125;">用户模块</div>
<div class="r" style="left:2442px;top:1515.62px;width:144px;height:56px;background:#ee3b1b;border-radius:6px"></div>
<div class="r" style="left:2602px;top:1515.62px;width:144px;height:56px;background:#c21a44;border-radius:6px"></div>
<svg class="abs" style="left:2467px;top:1531.12px" width="25" height="25" viewBox="0 0 28 28"><path d="M2 27 V21.5 L18.5 5 L24 10.5 L7.5 27 Z M20 3.5 L22 1.5 C23 0.5 24 0.5 25 1.5 L27.5 4 C28.5 5 28.5 6 27.5 7 L25.5 9 Z" fill="#fff"/></svg>
<div class="t" style="left:2511px;top:1525.12px;font-size:28px;line-height:40px;color:#fff;-webkit-text-stroke:0.6px #fff">编辑</div>
<svg class="abs" style="left:2627px;top:1531.62px" width="26" height="26" viewBox="0 0 26 26" fill="none" stroke="#fff"><path d="M2 3.5 H24" stroke-width="2.6"/><path d="M9 3.5 V1.5 H17 V3.5" stroke-width="2.2"/><path d="M5 4 V23.5 H21 V4" stroke-width="2.6"/><path d="M10.5 8.5 V18.5 M15.5 8.5 V18.5" stroke-width="2.4"/></svg>
<div class="t" style="left:2671px;top:1525.12px;font-size:28px;line-height:40px;color:#fff;-webkit-text-stroke:0.6px #fff">删除</div>
</div>
</body></html>
